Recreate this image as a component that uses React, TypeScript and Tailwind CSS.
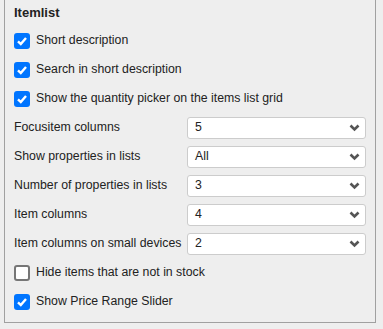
import { ReactNode } from 'react';

function Check({ checked }: { checked: boolean }) {
  if (!checked) {
    return <span className="block h-4 w-4 shrink-0 rounded-[3px] border-2 border-[#767676] bg-white" />;
  }
  return (
    <span className="flex h-4 w-4 shrink-0 items-center justify-center rounded-[3px] bg-[#0075ff]">
      <svg width="12" height="12" viewBox="0 0 12 12">
        <polyline points="2,6.3 4.8,9 10,3" fill="none" stroke="#fff" strokeWidth="2.4" />
      </svg>
    </span>
  );
}

function CheckRow({ label, checked }: { label: string; checked: boolean }) {
  return (
    <div className="flex h-[29px] items-center gap-[6px]">
      <Check checked={checked} />
      <span className="whitespace-nowrap">{label}</span>
    </div>
  );
}

function SelectRow({ label, value }: { label: string; value: ReactNode }) {
  return (
    <div className="flex h-[29px] items-center">
      <span className="w-[173px] shrink-0 whitespace-nowrap">{label}</span>
      <div className="flex h-[22px] w-[179px] items-center justify-between rounded-[3px] border border-[#cccccc] bg-white pl-[7px] pr-[5px]">
        <span>{value}</span>
        <svg width="11" height="8" viewBox="0 0 11 8">
          <polyline points="1.5,1.5 5.5,5.5 9.5,1.5" fill="none" stroke="#555" strokeWidth="2.6" />
        </svg>
      </div>
    </div>
  );
}

export default function App() {
  return (
    <div className="h-[329px] w-[383px] bg-[#eeeeee] pl-1 text-[12.3px] text-[#222] [font-family:'Liberation_Sans',Arial,sans-serif]">
      <div className="w-[372px] border-x border-b border-[#a0a0a0] pb-[6px] pl-[9px]">
        <div className="flex h-[26px] items-center text-[13px] font-bold">Itemlist</div>
        <CheckRow label="Short description" checked />
        <CheckRow label="Search in short description" checked />
        <CheckRow label="Show the quantity picker on the items list grid" checked />
        <SelectRow label="Focusitem columns" value="5" />
        <SelectRow label="Show properties in lists" value="All" />
        <SelectRow label="Number of properties in lists" value="3" />
        <SelectRow label="Item columns" value="4" />
        <SelectRow label="Item columns on small devices" value="2" />
        <CheckRow label="Hide items that are not in stock" checked={false} />
        <CheckRow label="Show Price Range Slider" checked />
      </div>
    </div>
  );
}
